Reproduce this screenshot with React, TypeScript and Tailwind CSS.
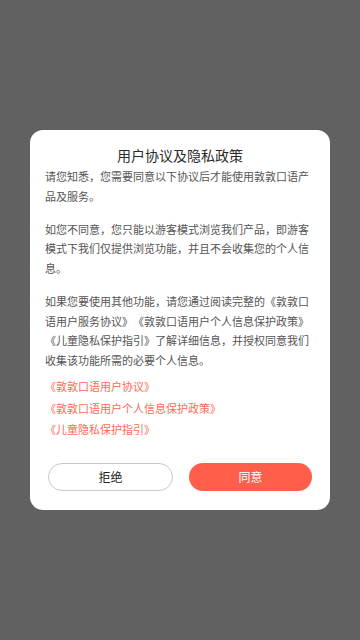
import React from 'react';

const FONT = { fontFamily: '"Noto Sans CJK SC", "Noto Sans", sans-serif' };

const links = ['《敦敦口语用户协议》', '《敦敦口语用户个人信息保护政策》', '《儿童隐私保护指引》'];

export default function App() {
  return (
    <div className="w-[360px] h-[640px] bg-[#616161] flex items-center justify-center" style={FONT}>
      <div className="w-[300px] bg-white rounded-[13px] pt-[15px] pb-[19px] [text-spacing-trim:space-all]">
        {/* Title */}
        <h1 className="text-center text-[14px] leading-[20px] font-normal text-[#2a2a2a]">用户协议及隐私政策</h1>

        {/* Body */}
        <div className="px-[15px] mt-[2px] text-[11px] leading-[19.6px] text-[#555]">
          <p>请您知悉，您需要同意以下协议后才能使用敦敦口语产品及服务。</p>
          <p className="mt-[13.5px]">
            如您不同意，您只能以游客模式浏览我们产品，即游客模式下我们仅提供浏览功能，并且不会收集您的个人信息。
          </p>
          <p className="mt-[13.5px]">
            如果您要使用其他功能，请您通过阅读完整的《敦敦口语用户服务协议》《敦敦口语用户个人信息保护政策》《儿童隐私保护指引》了解详细信息，并授权同意我们收集该功能所需的必要个人信息。
          </p>
        </div>

        {/* Links */}
        <div className="px-[15px] mt-[6px] flex flex-col">
          {links.map((l) => (
            <span key={l} className="text-[11px] leading-[21.5px] text-[#ff6a55]">
              {l}
            </span>
          ))}
        </div>

        {/* Buttons */}
        <div className="mt-[22px] px-[18px] flex gap-[16px]">
          <button className="flex-1 h-[28px] rounded-full border border-[#c8c8c8] bg-white text-[12px] text-[#222]">
            拒绝
          </button>
          <button className="flex-1 h-[28px] rounded-full bg-[#ff5e4b] text-[12px] text-white">
            同意
          </button>
        </div>
      </div>
    </div>
  );
}
